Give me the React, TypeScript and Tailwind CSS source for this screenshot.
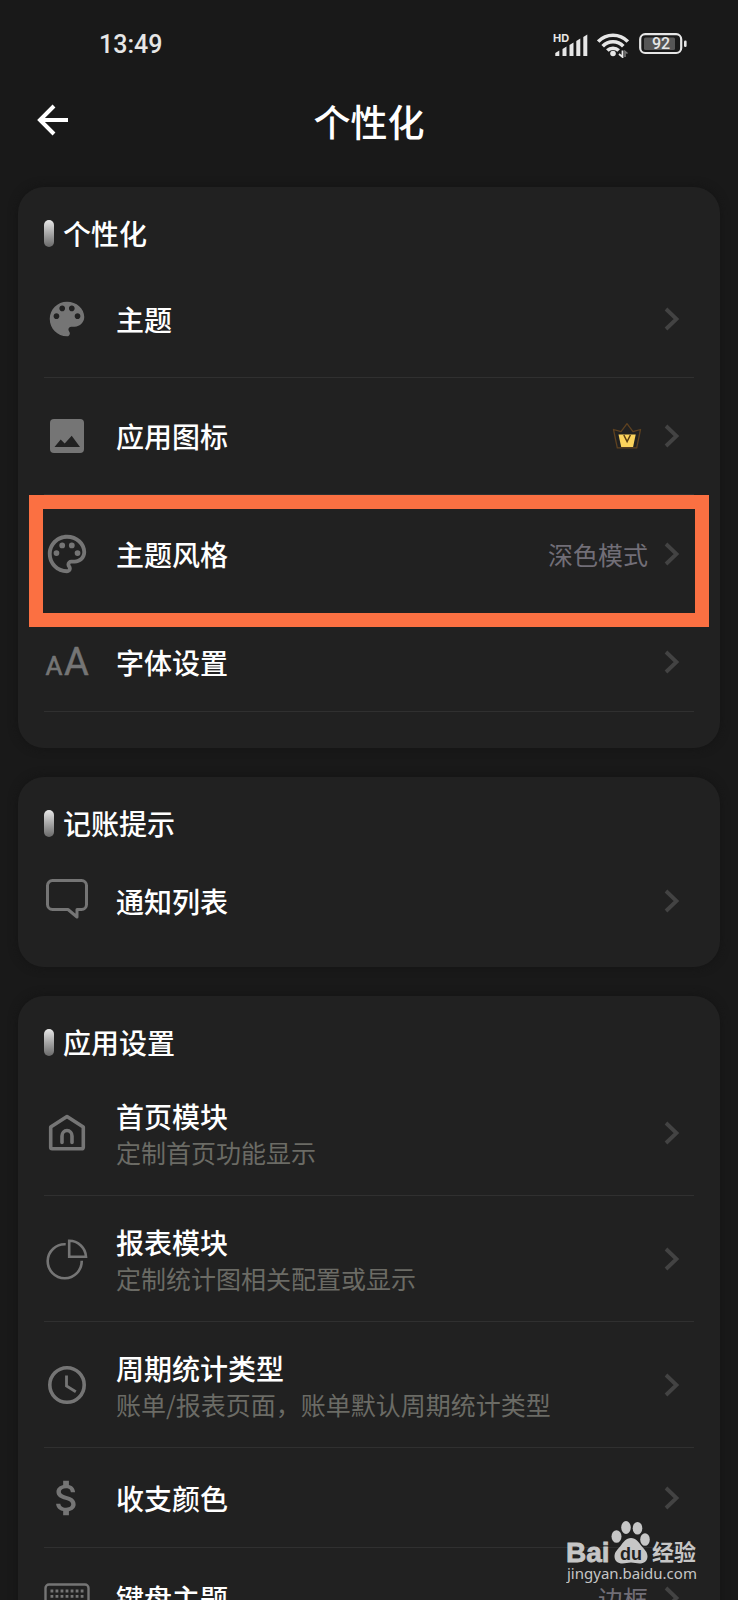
import type { ReactNode } from "react";

interface SettingItem {
  title: string;
  icon: ReactNode;
  desc?: string;
  value?: string;
  vip?: boolean;
  size: "sm" | "md" | "lg";
  divider?: boolean;
  highlighted?: boolean;
}

interface SettingGroup {
  title: string;
  items: SettingItem[];
}

const rowHeights = {
  sm: "h-[100px]",
  md: "h-[117px]",
  lg: "h-[126px]",
};

function PaletteIcon() {
  return (
    <svg viewBox="0 0 24 24" className="size-[46px]" fill="currentColor" aria-hidden="true">
      <path d="M12 3c-4.97 0-9 4.03-9 9s4.03 9 9 9c.83 0 1.5-.67 1.5-1.5 0-.39-.15-.74-.39-1.01-.23-.26-.38-.61-.38-.99 0-.83.67-1.5 1.5-1.5H16c2.76 0 5-2.24 5-5 0-4.42-4.03-8-9-8zm-5.5 9c-.83 0-1.5-.67-1.5-1.5S5.67 9 6.5 9 8 9.67 8 10.5 7.33 12 6.5 12zm3-4C8.67 8 8 7.33 8 6.5S8.67 5 9.5 5s1.5.67 1.5 1.5S10.33 8 9.5 8zm5 0c-.83 0-1.5-.67-1.5-1.5S13.67 5 14.5 5s1.5.67 1.5 1.5S15.33 8 14.5 8zm3 4c-.83 0-1.5-.67-1.5-1.5S16.67 9 17.5 9s1.5.67 1.5 1.5-.67 1.5-1.5 1.5z" />
    </svg>
  );
}

function PaletteOutlineIcon() {
  return (
    <svg viewBox="0 0 24 24" className="size-[46px]" fill="currentColor" aria-hidden="true">
      <path d="M12 22C6.49 22 2 17.51 2 12S6.49 2 12 2s10 4.04 10 9c0 3.31-2.69 6-6 6h-1.77c-.28 0-.5.22-.5.5 0 .12.05.23.13.33.41.47.64 1.06.64 1.67A2.5 2.5 0 0 1 12 22zm0-18c-4.41 0-8 3.59-8 8s3.59 8 8 8c.28 0 .5-.22.5-.5a.54.54 0 0 0-.14-.35c-.41-.46-.63-1.05-.63-1.65a2.5 2.5 0 0 1 2.5-2.5H16c2.21 0 4-1.79 4-4 0-3.86-3.59-7-8-7z" />
      <circle cx="6.5" cy="11.5" r="1.5" />
      <circle cx="9.5" cy="7.5" r="1.5" />
      <circle cx="14.5" cy="7.5" r="1.5" />
      <circle cx="17.5" cy="11.5" r="1.5" />
    </svg>
  );
}

function PictureIcon() {
  return (
    <svg viewBox="0 0 46 46" className="size-[46px]" aria-hidden="true">
      <rect x="6" y="6" width="34" height="34" rx="4" fill="currentColor" />
      <path d="M10.5 34l6.2-7.6 4 4.2 7-7.8L36 34z" fill="#212121" />
    </svg>
  );
}

function FontSizeIcon() {
  return (
    <svg
      viewBox="0 0 46 46"
      className="size-[46px] font-['Roboto',sans-serif] font-normal"
      fill="currentColor"
      stroke="currentColor"
      strokeLinejoin="round"
      aria-hidden="true"
    >
      <text x="1.5" y="35.5" fontSize="26" strokeWidth="0.7">A</text>
      <text x="20" y="35.5" fontSize="38" strokeWidth="0.5">A</text>
    </svg>
  );
}

function MessageIcon() {
  return (
    <svg viewBox="0 0 46 46" className="size-[46px]" fill="none" stroke="currentColor" strokeWidth="3" strokeLinejoin="round" aria-hidden="true">
      <path d="M8.5 2.5h29a5 5 0 0 1 5 5v19a5 5 0 0 1-5 5H33V39l-9-7.5H8.5a5 5 0 0 1-5-5v-19a5 5 0 0 1 5-5z" />
    </svg>
  );
}

function HomeIcon() {
  return (
    <svg viewBox="0 0 46 46" className="size-[46px]" fill="none" stroke="currentColor" strokeWidth="3.6" strokeLinejoin="round" aria-hidden="true">
      <path d="M23 6.5L39.3 17v20.3a1.5 1.5 0 0 1-1.5 1.5H8.2a1.5 1.5 0 0 1-1.5-1.5V17z" />
      <path d="M18 32.5V26a5 5.5 0 0 1 10 0v6.5" strokeLinecap="round" />
    </svg>
  );
}

function PieIcon() {
  return (
    <svg viewBox="0 0 46 46" className="size-[46px]" fill="none" stroke="currentColor" strokeWidth="2.6" aria-hidden="true">
      <path d="M21.7 8.3A17 17 0 1 0 37.7 24.8" />
      <path d="M25.2 4.8a16.8 16.8 0 0 1 16.8 16H25.2z" />
    </svg>
  );
}

function ClockIcon() {
  return (
    <svg viewBox="0 0 46 46" className="size-[46px]" fill="none" stroke="currentColor" aria-hidden="true">
      <circle cx="23" cy="23" r="17.2" strokeWidth="3.6" />
      <path d="M22.5 13.5V24l9.3 5.7" strokeWidth="2.8" />
    </svg>
  );
}

function DollarIcon() {
  return (
    <svg viewBox="0 0 24 24" className="size-[46px]" fill="currentColor" aria-hidden="true">
      <path d="M11.8 10.9c-2.27-.59-3-1.2-3-2.15 0-1.09 1.01-1.85 2.7-1.85 1.78 0 2.44.85 2.5 2.1h2.21c-.07-1.72-1.12-3.3-3.21-3.81V3h-3v2.16c-1.94.42-3.5 1.68-3.5 3.61 0 2.31 1.91 3.46 4.7 4.13 2.5.6 3 1.48 3 2.41 0 .69-.49 1.79-2.7 1.79-2.06 0-2.87-.92-2.98-2.1h-2.2c.12 2.19 1.76 3.42 3.68 3.83V21h3v-2.15c1.95-.37 3.5-1.5 3.5-3.55 0-2.84-2.43-3.81-4.7-4.4z" />
    </svg>
  );
}

function KeyboardIcon() {
  return (
    <svg viewBox="0 0 46 46" className="size-[46px]" fill="none" stroke="currentColor" aria-hidden="true">
      <rect x="1.5" y="9.5" width="43" height="28" rx="3.5" strokeWidth="2.4" />
      <path d="M6.5 16h33M6.5 21.3h33" strokeWidth="2.8" strokeDasharray="2.8 2.233" />
      <path d="M6.5 26.5h3M12 26.5h22M36.6 26.5h3" strokeWidth="2.8" />
    </svg>
  );
}

function CrownIcon() {
  return (
    <svg viewBox="0 0 30 28" className="mr-[6px] h-7 w-[30px]" aria-hidden="true">
      <path d="M1.5 7.5l7.5 2.2 6-8 6 8 7.5-2.2-3.8 18.3H5.3z" fill="none" stroke="#5f4220" strokeWidth="1.3" strokeLinejoin="round" />
      <path d="M6.5 12.5h17.2l-2.6 12.6H9.2z" fill="#fbd35c" />
      <path d="M11.8 13l3.3 6.5 3.3-6.5" fill="none" stroke="#5a3c12" strokeWidth="1.5" />
    </svg>
  );
}

function Chevron() {
  return (
    <svg viewBox="0 0 16 24" className="h-6 w-4" fill="none" stroke="#434343" strokeWidth="3.8" aria-hidden="true">
      <path d="M2 2l10.5 10L2 22" />
    </svg>
  );
}

const groups: SettingGroup[] = [
  {
    title: "个性化",
    items: [
      { title: "主题", icon: <PaletteIcon />, size: "md", divider: true },
      { title: "应用图标", icon: <PictureIcon />, size: "md", divider: true, vip: true },
      { title: "主题风格", icon: <PaletteOutlineIcon />, size: "md", value: "深色模式", highlighted: true },
      { title: "字体设置", icon: <FontSizeIcon />, size: "sm", divider: true },
    ],
  },
  {
    title: "记账提示",
    items: [{ title: "通知列表", icon: <MessageIcon />, size: "sm" }],
  },
  {
    title: "应用设置",
    items: [
      { title: "首页模块", desc: "定制首页功能显示", icon: <HomeIcon />, size: "lg", divider: true },
      { title: "报表模块", desc: "定制统计图相关配置或显示", icon: <PieIcon />, size: "lg", divider: true },
      { title: "周期统计类型", desc: "账单/报表页面，账单默认周期统计类型", icon: <ClockIcon />, size: "lg", divider: true },
      { title: "收支颜色", icon: <DollarIcon />, size: "sm", divider: true },
      { title: "键盘主题", icon: <KeyboardIcon />, size: "sm", value: "边框" },
    ],
  },
];

// bottom space below the last row of each card
const groupPadding = ["pb-9", "pb-4", "pb-8"];

function StatusBar() {
  return (
    <div className="flex h-[88px] items-center justify-between pt-[2px] pr-[49px] pl-[99px] text-[#e6e6e6]">
      <span className="font-['Roboto',sans-serif] text-[25px] font-medium">13:49</span>
      <div className="flex items-center gap-2">
        <svg viewBox="0 0 36 26" className="h-[26px] w-9" fill="currentColor" aria-hidden="true">
          <text x="0" y="9.5" fontSize="11" fontWeight="700" className="font-['Inter',sans-serif]">HD</text>
          <path d="M2.3 24v-3l4-2.5V24zM9.5 24v-7l4-2.5V24zM16.5 24V13l4-2.5V24zM23.3 24V9l4-2.5V24zM30.3 24V5l4-2.5V24z" />
        </svg>
        <svg viewBox="0 0 32 26" className="h-[26px] w-8" fill="none" stroke="currentColor" strokeWidth="3.6" aria-hidden="true">
          <path d="M1.2 9.6a20.5 20.5 0 0 1 29.6 0" />
          <path d="M5.7 14.2a14.2 14.2 0 0 1 20.6 0" />
          <path d="M10.3 18.6a8 8 0 0 1 11.4 0" />
          <circle cx="16" cy="21.5" r="2.8" fill="currentColor" stroke="none" />
          <path d="M25.5 18.5V25l-3.500-3" strokeWidth="1.8" />
          <path d="M28 25v-5.500l2.500 2" strokeWidth="1.6" stroke="#777" />
        </svg>
        <svg viewBox="0 0 50 26" className="ml-[2px] h-[26px] w-[50px]" fill="none" aria-hidden="true">
          <rect x="1.2" y="2.2" width="41" height="18.8" rx="5" stroke="currentColor" strokeWidth="2.2" />
          <rect x="5" y="5.5" width="31" height="12.5" rx="1.5" fill="#565656" />
          <rect x="45" y="8.5" width="2.6" height="6.5" rx="1.2" fill="currentColor" />
          <text x="22" y="17.3" textAnchor="middle" fontSize="16" fontWeight="500" fill="currentColor" className="font-['Roboto',sans-serif]">92</text>
        </svg>
      </div>
    </div>
  );
}

function SettingRow({ item }: { item: SettingItem }) {
  return (
    <li className="relative">
      <a
        href="#"
        className={`flex items-center ${rowHeights[item.size]} ${item.divider ? "border-b border-[#303030]" : ""}`}
      >
        <span className="w-[72px] shrink-0 text-[#757575]">{item.icon}</span>
        <span className="flex min-w-0 flex-1 flex-col">
          <span className="text-[28px] leading-[38px] font-medium text-white">{item.title}</span>
          {item.desc && (
            <span className="text-[25px] leading-[34px] whitespace-nowrap text-[#6b6b65]">{item.desc}</span>
          )}
        </span>
        <span className="mr-[14px] flex shrink-0 items-center gap-4">
          {item.vip && <CrownIcon />}
          {item.value && (
            <span className="text-[25px] leading-[34px] text-[#716e77]">{item.value}</span>
          )}
          <Chevron />
        </span>
      </a>
      {item.highlighted && (
        <div className="pointer-events-none absolute -inset-x-[15px] top-0 z-10 h-[132px] border-[14px] border-[#fb7042]" />
      )}
    </li>
  );
}

function Watermark() {
  return (
    <div className="absolute right-[32px] bottom-[14px] z-20 text-[#c6c6c6]">
      <svg viewBox="0 0 140 70" className="h-[70px] w-[140px]" fill="currentColor" role="img" aria-label="Baidu">
        <text x="0" y="45.5" fontSize="28" fontWeight="700" stroke="currentColor" strokeWidth="0.8" className="font-['Liberation_Sans',sans-serif]">Bai</text>
        <ellipse cx="50.5" cy="20.5" rx="5" ry="6.3" />
        <ellipse cx="60" cy="11.5" rx="4.8" ry="6.5" />
        <ellipse cx="71.5" cy="12.2" rx="4.8" ry="6.3" />
        <ellipse cx="79" cy="23.5" rx="4.8" ry="6.3" />
        <path d="M65 22c5 0 7.5 4 10.5 8 3 3.5 6 6 6 10.5 0 4.5-3.5 7-8 7-3 0-5.5-1-8.5-1s-5.5 1-8.5 1c-4.5 0-8-2.5-8-7 0-4.5 3-7 6-10.5 3-4 5.5-8 10.5-8z" />
        <text x="65" y="43.5" textAnchor="middle" fontSize="18" fontWeight="700" fill="#212121" className="font-['Liberation_Sans',sans-serif]">du</text>
        <text x="86" y="44" fontSize="22" fontWeight="700" className="font-['Noto_Sans_CJK_SC',sans-serif]">经验</text>
        <text x="1" y="63" fontSize="15" className="font-['Noto_Sans',sans-serif]">jingyan.baidu.com</text>
      </svg>
    </div>
  );
}

export default function App() {
  return (
    <div className="relative h-screen overflow-hidden bg-[#191919] font-['Noto_Sans_CJK_SC',sans-serif]">
      <StatusBar />

      {/* Title bar */}
      <header className="mb-[35px] grid h-16 grid-cols-[1fr_auto_1fr] items-center px-9">
        <button type="button" aria-label="返回" className="justify-self-start text-white">
          <svg viewBox="0 0 34 34" className="size-[34px]" fill="none" stroke="currentColor" strokeWidth="4" aria-hidden="true">
            <path d="M32 17H4.5M18 3L4 17l14 14" />
          </svg>
        </button>
        <h1 className="pt-1 text-[37px] font-medium text-white">个性化</h1>
      </header>

      {/* Setting cards */}
      <main className="flex flex-col gap-[29px] px-[18px]">
        {groups.map((group, index) => (
          <section
            key={group.title}
            className={`rounded-[26px] bg-[#212121] px-[26px] pt-[18px] shadow-[0_0_10px_#141414] ${groupPadding[index]}`}
          >
            <h2 className="flex h-14 items-center gap-[9px] text-[28px] font-medium text-white">
              <span className="h-[27px] w-[10px] rounded-full bg-linear-to-b from-[#e8e8e8] to-[#6a6a6a]" />
              {group.title}
            </h2>
            <ul>
              {group.items.map((item) => (
                <SettingRow key={item.title} item={item} />
              ))}
            </ul>
          </section>
        ))}
      </main>

      <Watermark />
    </div>
  );
}
